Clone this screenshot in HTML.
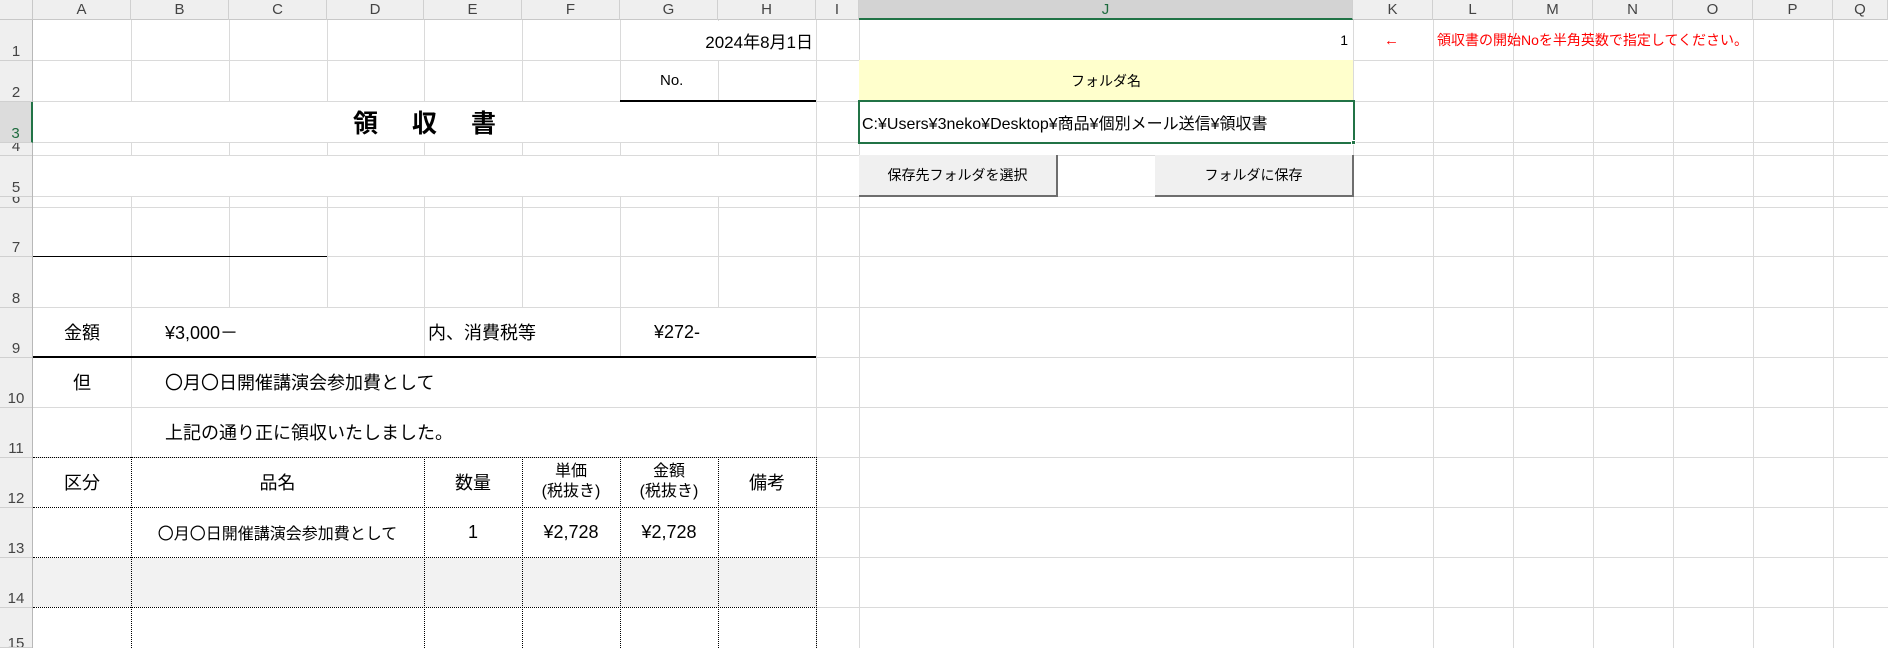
<!DOCTYPE html>
<html><head><meta charset="utf-8">
<style>
*{margin:0;padding:0;box-sizing:border-box}
body{width:1888px;height:648px;overflow:hidden;background:#fff;position:relative;font-family:"Liberation Sans","Noto Sans CJK JP",sans-serif;color:#000}
div{position:absolute}
.h{height:1px;background:#dadada;left:33px;width:1855px}
.v{width:1px;background:#dadada;top:20px;height:628px}
.w{background:#fff}
.ch{top:0;height:20px;font-size:15px;color:#444;text-align:center;line-height:20px;border-right:1px solid #d0d0d0}
.rh{left:0;width:32px;font-size:15px;color:#444;text-align:center;display:flex;align-items:flex-end;justify-content:center;padding-bottom:0;border-bottom:1px solid #d0d0d0;overflow:hidden;line-height:16px}
.t{font-size:18px;white-space:nowrap;display:flex;align-items:center}
.c{justify-content:center}
.dh{height:0;border-top:1px dotted #000}
.dv{width:0;border-left:1px dotted #000}
.btn{background:#f0f0f0;border-right:2px solid #6e6e6e;border-bottom:2px solid #6e6e6e;font-size:14px;display:flex;align-items:center;justify-content:center}
</style></head><body>
<div class="h" style="top:60px"></div><div class="h" style="top:101px"></div><div class="h" style="top:142px"></div>
<div class="h" style="top:155px"></div><div class="h" style="top:196px"></div><div class="h" style="top:207px"></div>
<div class="h" style="top:256px"></div><div class="h" style="top:307px"></div><div class="h" style="top:357px"></div>
<div class="h" style="top:407px"></div><div class="h" style="top:457px"></div><div class="h" style="top:507px"></div>
<div class="h" style="top:557px"></div><div class="h" style="top:607px"></div>
<div class="v" style="left:131px"></div><div class="v" style="left:229px"></div><div class="v" style="left:327px"></div>
<div class="v" style="left:424px"></div><div class="v" style="left:522px"></div><div class="v" style="left:620px"></div>
<div class="v" style="left:718px"></div><div class="v" style="left:816px"></div><div class="v" style="left:859px"></div>
<div class="v" style="left:1353px"></div><div class="v" style="left:1433px"></div><div class="v" style="left:1513px"></div>
<div class="v" style="left:1593px"></div><div class="v" style="left:1673px"></div><div class="v" style="left:1753px"></div>
<div class="v" style="left:1833px"></div>
<div class="w" style="left:717px;top:21px;width:3px;height:39px"></div>
<div class="w" style="left:34px;top:102px;width:781px;height:40px"></div>
<div class="w" style="left:34px;top:156px;width:781px;height:40px"></div>
<div class="w" style="left:860px;top:20px;width:493px;height:40px"></div>
<div class="w" style="left:132px;top:308px;width:291px;height:49px"></div>
<div class="w" style="left:425px;top:308px;width:194px;height:49px"></div>
<div class="w" style="left:621px;top:308px;width:194px;height:49px"></div>
<div class="w" style="left:132px;top:358px;width:683px;height:49px"></div>
<div class="w" style="left:132px;top:408px;width:683px;height:49px"></div>
<div class="w" style="left:33px;top:458px;width:783px;height:190px"></div>
<div style="left:33px;top:558px;width:783px;height:49px;background:#f2f2f2"></div>
<div class="dh" style="left:33px;top:457px;width:784px"></div>
<div class="dh" style="left:33px;top:507px;width:784px"></div>
<div class="dh" style="left:33px;top:557px;width:784px"></div>
<div class="dh" style="left:33px;top:607px;width:784px"></div>
<div class="dv" style="left:131px;top:457px;height:191px"></div>
<div class="dv" style="left:424px;top:457px;height:191px"></div>
<div class="dv" style="left:522px;top:457px;height:191px"></div>
<div class="dv" style="left:620px;top:457px;height:191px"></div>
<div class="dv" style="left:718px;top:457px;height:191px"></div>
<div class="dv" style="left:816px;top:457px;height:191px"></div>
<div style="left:620px;top:100px;width:196px;height:2px;background:#000"></div>
<div style="left:33px;top:256px;width:294px;height:1px;background:#000"></div>
<div style="left:33px;top:356px;width:783px;height:2px;background:#000"></div>
<div style="left:0;top:0;width:1888px;height:20px;background:#efefef;border-bottom:1px solid #c8c8c8"></div>
<div style="left:0;top:0;width:33px;height:20px;border-right:1px solid #c8c8c8"></div>
<div class="ch" style="left:33px;width:98px">A</div><div class="ch" style="left:131px;width:98px">B</div>
<div class="ch" style="left:229px;width:98px">C</div><div class="ch" style="left:327px;width:97px">D</div>
<div class="ch" style="left:424px;width:98px">E</div><div class="ch" style="left:522px;width:98px">F</div>
<div class="ch" style="left:620px;width:98px">G</div><div class="ch" style="left:718px;width:98px">H</div>
<div class="ch" style="left:816px;width:43px">I</div>
<div class="ch" style="left:859px;width:494px;background:#d3d3d3;color:#1e6b3e;border-bottom:2px solid #217346;height:20px">J</div>
<div class="ch" style="left:1353px;width:80px">K</div><div class="ch" style="left:1433px;width:80px">L</div>
<div class="ch" style="left:1513px;width:80px">M</div><div class="ch" style="left:1593px;width:80px">N</div>
<div class="ch" style="left:1673px;width:80px">O</div><div class="ch" style="left:1753px;width:80px">P</div>
<div class="ch" style="left:1833px;width:55px">Q</div>
<div style="left:0;top:20px;width:33px;height:628px;background:#efefef;border-right:1px solid #b8b8b8"></div>
<div class="rh" style="top:20px;height:41px">1</div>
<div class="rh" style="top:61px;height:41px">2</div>
<div class="rh" style="top:102px;height:41px;background:#dcdcdc;color:#1e6b3e;border-right:2px solid #217346;width:33px">3</div>
<div class="rh" style="top:143px;height:13px">4</div>
<div class="rh" style="top:156px;height:41px">5</div>
<div class="rh" style="top:197px;height:11px">6</div>
<div class="rh" style="top:208px;height:49px">7</div>
<div class="rh" style="top:257px;height:51px">8</div>
<div class="rh" style="top:308px;height:50px">9</div>
<div class="rh" style="top:358px;height:50px">10</div>
<div class="rh" style="top:408px;height:50px">11</div>
<div class="rh" style="top:458px;height:50px">12</div>
<div class="rh" style="top:508px;height:50px">13</div>
<div class="rh" style="top:558px;height:50px">14</div>
<div class="rh" style="top:608px;height:40px;align-items:flex-start;padding-top:28px">15</div>
<div class="t" style="left:620px;top:20px;width:193px;height:40px;justify-content:flex-end;font-size:17px">2024年8月1日</div>
<div class="t" style="left:660px;top:60px;width:50px;height:41px;font-size:15px">No.</div>
<div class="t c" style="left:33px;top:101px;width:783px;height:41px;font-size:25px;font-weight:bold;letter-spacing:34px;padding-left:34px">領収書</div>
<div class="t c" style="left:33px;top:307px;width:98px;height:50px">金額</div>
<div class="t" style="left:165px;top:307px;height:50px">¥3,000－</div>
<div class="t" style="left:428px;top:307px;height:50px">内、消費税等</div>
<div class="t" style="left:654px;top:307px;height:50px">¥272-</div>
<div class="t c" style="left:33px;top:357px;width:98px;height:50px">但</div>
<div class="t" style="left:165px;top:357px;height:50px">〇月〇日開催講演会参加費として</div>
<div class="t" style="left:165px;top:407px;height:50px">上記の通り正に領収いたしました。</div>
<div class="t c" style="left:33px;top:457px;width:98px;height:50px">区分</div>
<div class="t c" style="left:131px;top:457px;width:293px;height:50px">品名</div>
<div class="t c" style="left:424px;top:457px;width:98px;height:50px">数量</div>
<div class="t c" style="left:522px;top:457px;width:98px;height:50px;flex-direction:column;font-size:16px;line-height:20px">単価<span>(税抜き)</span></div>
<div class="t c" style="left:620px;top:457px;width:98px;height:50px;flex-direction:column;font-size:16px;line-height:20px">金額<span>(税抜き)</span></div>
<div class="t c" style="left:718px;top:457px;width:98px;height:50px">備考</div>
<div class="t c" style="left:131px;top:507px;width:293px;height:50px;font-size:16px">〇月〇日開催講演会参加費として</div>
<div class="t c" style="left:424px;top:507px;width:98px;height:50px">1</div>
<div class="t c" style="left:522px;top:507px;width:98px;height:50px">¥2,728</div>
<div class="t c" style="left:620px;top:507px;width:98px;height:50px">¥2,728</div>
<div class="t" style="left:859px;top:20px;width:489px;height:40px;justify-content:flex-end;font-size:14px">1</div>
<div class="t" style="left:1384px;top:20px;height:40px;font-size:15px;color:#f00">←</div>
<div class="t" style="left:1437px;top:20px;height:40px;font-size:14px;color:#f00">領収書の開始Noを半角英数で指定してください。</div>
<div class="t c" style="left:859px;top:60px;width:494px;height:41px;background:#ffffcc;font-size:14px">フォルダ名</div>
<div style="left:858px;top:100px;width:497px;height:44px;border:2px solid #217346;background:#fff"></div>
<div style="left:1351px;top:140px;width:5px;height:5px;background:#217346;border:1px solid #fff"></div>
<div class="t" style="left:862px;top:101px;height:41px;font-size:16px">C:¥Users¥3neko¥Desktop¥商品¥個別メール送信¥領収書</div>
<div class="btn" style="left:859px;top:155px;width:199px;height:42px">保存先フォルダを選択</div>
<div class="btn" style="left:1155px;top:155px;width:199px;height:42px">フォルダに保存</div>
</body></html>
